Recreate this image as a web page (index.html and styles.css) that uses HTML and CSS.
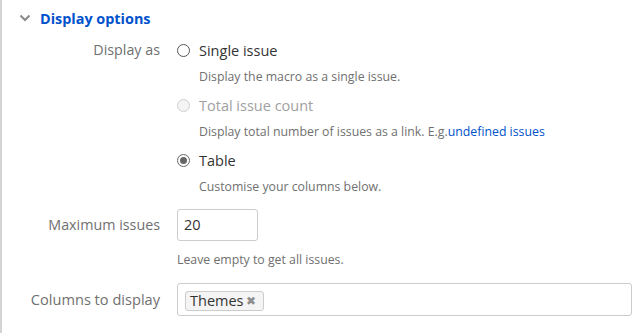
FILE: index.html
```html
<!DOCTYPE html>
<html lang="en">
<head>
    <meta charset="UTF-8">
    <meta name="viewport" content="width=device-width, initial-scale=1.0">
    <link rel="stylesheet" href="styles.css">
    <title>Display options</title>
</head>
<body>
    <div class="panel">
        <div class="section-head">
            <svg class="chevron" width="12" height="8" viewBox="0 0 12 8">
                <path d="M1.5 1.5 L6 6 L10.5 1.5" fill="none" stroke="#8a8a8a" stroke-width="2"/>
            </svg>
            <span class="section-title">Display options</span>
        </div>

        <div class="form-row">
            <div class="label">Display as</div>
            <div class="field">
                <div class="option">
                    <div class="option-line"><span class="radio"></span>Single issue</div>
                    <div class="desc">Display the macro as a single issue.</div>
                </div>
                <div class="option disabled">
                    <div class="option-line"><span class="radio"></span>Total issue count</div>
                    <div class="desc">Display total number of issues as a link. E.g.<a href="#">undefined issues</a></div>
                </div>
                <div class="option">
                    <div class="option-line"><span class="radio checked"></span>Table</div>
                    <div class="desc">Customise your columns below.</div>
                </div>
            </div>
        </div>

        <div class="form-row row-input">
            <div class="label">Maximum issues</div>
            <div class="field">
                <div class="text-input">20</div>
                <div class="hint">Leave empty to get all issues.</div>
            </div>
        </div>

        <div class="form-row row-columns">
            <div class="label">Columns to display</div>
            <div class="field">
                <div class="tag-box">
                    <span class="tag">Themes<span class="tag-remove">&#10006;</span></span>
                </div>
            </div>
        </div>
    </div>
</body>
</html>
```

FILE: styles.css
```css
body {
    margin: 0;
    padding: 0;
    font-family: "Open Sans", "Noto Sans", sans-serif;
    color: #333;
    background: #fff;
}

.panel {
    border-left: 2px solid #d4d4d4;
    height: 333px;
    box-sizing: border-box;
}

.section-head {
    display: flex;
    align-items: center;
    height: 36px;
    padding-left: 17px;
}

.chevron {
    margin-right: 9px;
}

.section-title {
    color: #0052cc;
    font-weight: bold;
    font-size: 14.4px;
}

.form-row {
    display: grid;
    grid-template-columns: 158px 455px;
    column-gap: 17px;
    margin-top: 2px;
}

.label {
    text-align: right;
    color: #707070;
    font-size: 14.3px;
    line-height: 24px;
}

.option {
    margin-bottom: 6px;
}

.option:last-child {
    margin-bottom: 0;
}

.option-line {
    display: flex;
    align-items: center;
    height: 24px;
    font-size: 14.5px;
}

.radio {
    width: 11px;
    height: 11px;
    border: 1px solid #555;
    border-radius: 50%;
    margin-right: 9px;
    box-sizing: content-box;
    position: relative;
}

.radio.checked {
    border-color: #666;
}

.radio.checked::after {
    content: "";
    position: absolute;
    left: 2px;
    top: 2px;
    width: 7px;
    height: 7px;
    border-radius: 50%;
    background: #666;
}

.disabled .option-line {
    color: #a0a0a0;
}

.disabled .radio {
    border-color: #cfcfcf;
    background: #f4f4f4;
}

.desc, .hint {
    margin-top: 5px;
    font-size: 12.3px;
    line-height: 20px;
    color: #707070;
    padding-left: 22px;
}

.hint {
    padding-left: 0;
    margin-top: 9px;
}

.desc a {
    color: #0052cc;
    text-decoration: none;
}

.row-input {
    margin-top: 12px;
}

.row-input .label {
    line-height: 32px;
}

.text-input {
    width: 81px;
    height: 32px;
    box-sizing: border-box;
    border: 1px solid #ccc;
    border-radius: 3px;
    padding-left: 6px;
    font-size: 14.5px;
    line-height: 30px;
}

.row-columns {
    margin-top: 13px;
}

.row-columns .label {
    line-height: 33px;
    font-size: 14.6px;
}

.tag-box {
    height: 33px;
    box-sizing: border-box;
    border: 1px solid #ccc;
    border-radius: 3px;
    padding: 5px 7px;
}

.tag {
    display: inline-flex;
    align-items: center;
    height: 20px;
    box-sizing: border-box;
    padding: 0 7px 0 4px;
    border: 1px solid #ccc;
    border-radius: 3px;
    background: #f4f4f4;
    font-size: 14.5px;
}

.tag-remove {
    font-size: 11.5px;
    color: #8c8c8c;
    margin-left: 2px;
}
```
